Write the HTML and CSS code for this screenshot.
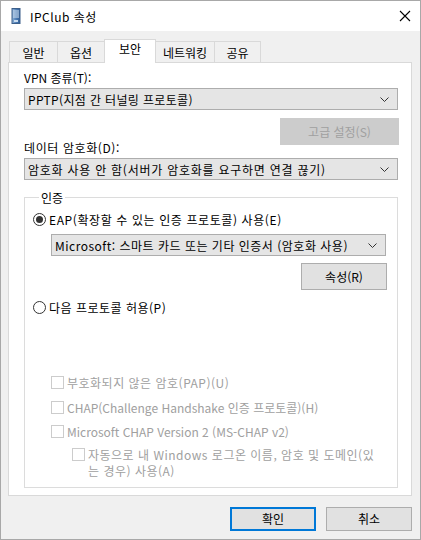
FILE: index.html
```html
<!DOCTYPE html>
<html lang="ko">
<head>
    <meta charset="UTF-8">
    <title>IPClub 속성</title>
    <link rel="stylesheet" href="styles.css">
</head>
<body>
<div class="window">
    <div class="titlebar">
        <svg class="app-icon" width="10" height="16" viewBox="0 0 10 16">
            <defs>
                <linearGradient id="srv" x1="0" y1="0" x2="1" y2="0">
                    <stop offset="0" stop-color="#8fb3d9"/>
                    <stop offset="0.5" stop-color="#4f7fb8"/>
                    <stop offset="1" stop-color="#2f5d96"/>
                </linearGradient>
            </defs>
            <rect x="1" y="0.5" width="8" height="15" fill="url(#srv)" stroke="#3c5f8a" stroke-width="1"/>
            <line x1="2" y1="3" x2="8" y2="3" stroke="#d6e4f2"/>
            <line x1="2" y1="5" x2="8" y2="5" stroke="#d6e4f2"/>
            <line x1="2" y1="7" x2="8" y2="7" stroke="#d6e4f2"/>
            <line x1="2" y1="9" x2="8" y2="9" stroke="#d6e4f2"/>
            <rect x="3" y="12" width="4" height="2" fill="#c9dcef"/>
        </svg>
        <span class="title">IPClub 속성</span>
        <svg class="close" width="12" height="12" viewBox="0 0 12 12">
            <path d="M1 1 L11 11 M11 1 L1 11" stroke="#000" stroke-width="1.1"/>
        </svg>
    </div>

    <div class="tabs">
        <div class="tab t1">일반</div>
        <div class="tab t2">옵션</div>
        <div class="tab t3 active">보안</div>
        <div class="tab t4">네트워킹</div>
        <div class="tab t5">공유</div>
    </div>

    <div class="panel">
        <div class="field-label">VPN 종류(T):</div>
        <div class="select">
            <span class="sp-s">PPTP(지점 간 터널링 프로토콜)</span>
            <svg class="chev" width="9" height="5" viewBox="0 0 9 5"><path d="M0.5 0.5 L4.5 4.5 L8.5 0.5" fill="none" stroke="#333"/></svg>
        </div>
        <div class="btn-row">
            <div class="btn disabled wide">고급 설정(S)</div>
        </div>
        <div class="field-label tight sp-l">데이터 암호화(D):</div>
        <div class="select">
            <span class="sp-xl">암호화 사용 안 함(서버가 암호화를 요구하면 연결 끊기)</span>
            <svg class="chev" width="9" height="5" viewBox="0 0 9 5"><path d="M0.5 0.5 L4.5 4.5 L8.5 0.5" fill="none" stroke="#333"/></svg>
        </div>

        <fieldset class="group">
            <legend>인증</legend>
            <div class="option first">
                <span class="radio checked"></span>
                <span class="sp-l">EAP(확장할 수 있는 인증 프로토콜) 사용(E)</span>
            </div>
            <div class="select inner">
                <span class="sp-m">Microsoft: 스마트 카드 또는 기타 인증서 (암호화 사용)</span>
                <svg class="chev" width="9" height="5" viewBox="0 0 9 5"><path d="M0.5 0.5 L4.5 4.5 L8.5 0.5" fill="none" stroke="#333"/></svg>
            </div>
            <div class="btn-row inner-row">
                <div class="btn">속성(R)</div>
            </div>
            <div class="option second">
                <span class="radio"></span>
                <span class="sp-m">다음 프로토콜 허용(P)</span>
            </div>

            <div class="check c1"><span class="box"></span><span class="sp-m">부호화되지 않은 암호(PAP)(U)</span></div>
            <div class="check"><span class="box"></span><span>CHAP(Challenge Handshake 인증 프로토콜)(H)</span></div>
            <div class="check c3"><span class="box"></span><span>Microsoft CHAP Version 2 (MS-CHAP v2)</span></div>
            <div class="check sub"><span class="box"></span><span class="sp-m">자동으로 내 Windows 로그온 이름, 암호 및 도메인(있<br>는 경우) 사용(A)</span></div>
        </fieldset>
    </div>

    <div class="footer">
        <div class="btn default">확인</div>
        <div class="btn">취소</div>
    </div>
</div>
</body>
</html>
```

FILE: styles.css
```css
html, body {
    margin: 0;
    padding: 0;
}

body {
    font: 12px/15px "Noto Sans CJK KR", "Noto Sans", sans-serif;
    color: #000;
    background: #f0f0f0;
}

/* 한글이 많은 줄은 맑은 고딕 폭에 맞춰 자간을 조금 넓힘 */
.sp-s { letter-spacing: 0.35px; }
.sp-m { letter-spacing: 0.5px; }
.sp-l { letter-spacing: 0.6px; }
.sp-xl { letter-spacing: 0.75px; }

.window {
    width: 421px;
    height: 540px;
    box-sizing: border-box;
    border: 1px solid #a8a8a8;
    background: #f0f0f0;
}

/* 제목 표시줄 */
.titlebar {
    height: 30px;
    background: #fff;
    display: flex;
    align-items: center;
    padding-left: 10px;
}

.app-icon {
    margin-right: 9px;
}

.title {
    flex: 1;
    letter-spacing: 0.5px;
}

.close {
    margin-right: 9px;
}

/* 탭 */
.tabs {
    display: flex;
    align-items: flex-end;
    height: 23px;
    margin-top: 8px;
    padding-left: 8px;
    position: relative;
    z-index: 2;
}

.tab {
    box-sizing: border-box;
    height: 21px;
    border: 1px solid #d9d9d9;
    border-bottom: 0;
    border-right: 0;
    background: #f0f0f0;
    text-align: center;
    line-height: 21px;
}

.t1 { width: 48px; }
.t2 { width: 47px; }
.t4 { width: 58px; border-left: 0; }
.t5 { width: 47px; border-right: 1px solid #d9d9d9; }

.tab.active {
    width: 52px;
    height: 24px;
    margin-bottom: -1px;
    background: #fff;
    border-right: 1px solid #d9d9d9;
    line-height: 18px;
}

.panel {
    margin: 0 8px 0 7px;
    border: 1px solid #d9d9d9;
    background: #fff;
    padding: 0 13px 7px 15px;
}

.field-label {
    margin-top: 7px;
}

.field-label.tight {
    margin-top: -5px;
}

.select {
    box-sizing: border-box;
    height: 22px;
    margin-top: 3px;
    border: 1px solid #adadad;
    background: #e5e5e5;
    display: flex;
    align-items: center;
    padding: 0 8px 0 3px;
}

.select span {
    flex: 1;
}

.btn-row {
    display: flex;
    justify-content: flex-end;
    margin-top: 8px;
    margin-right: -1px;
}

.btn {
    box-sizing: border-box;
    width: 86px;
    height: 27px;
    border: 1px solid #adadad;
    background: #e1e1e1;
    text-align: center;
    line-height: 25px;
}

.btn.wide {
    width: 119px;
}

.btn.disabled {
    background: #cccccc;
    border-color: #cccccc;
    color: #a0a0a0;
}

/* 그룹 상자 */
.group {
    margin: 10px 0 0;
    padding: 7px 11px 8px 8px;
    border: 1px solid #dcdcdc;
}

.group legend {
    padding: 0 2px;
    margin-left: 6px;
}

.option {
    display: flex;
    align-items: center;
}

.radio {
    box-sizing: border-box;
    width: 13px;
    height: 13px;
    border: 1px solid #333;
    border-radius: 50%;
    margin-right: 3px;
    display: flex;
    align-items: center;
    justify-content: center;
}

.radio.checked::after {
    content: "";
    width: 7px;
    height: 7px;
    border-radius: 50%;
    background: #333;
}

.select.inner {
    margin: 7px 0 0 18px;
}

.inner-row {
    margin-top: 7px;
}

.option.second {
    margin-top: 10px;
}

.check {
    display: flex;
    align-items: flex-start;
    margin-top: 10px;
    margin-left: 18px;
    color: #a0a0a0;
}

.check.c1 {
    margin-top: 60px;
}

.check.c3 {
    margin-top: 9px;
}

.check.sub {
    margin-top: 8px;
    margin-left: 39px;
    line-height: 16px;
}

.box {
    box-sizing: border-box;
    flex: none;
    width: 13px;
    height: 13px;
    margin-top: 1px;
    border: 1px solid #cccccc;
    margin-right: 3px;
}

.footer {
    display: flex;
    justify-content: flex-end;
    gap: 10px;
    margin-top: 11px;
    padding-right: 8px;
}

.footer .btn {
    width: 86px;
    height: 24px;
    line-height: 22px;
}

.footer .btn.default {
    border: 2px solid #0078d7;
    line-height: 20px;
}
```
